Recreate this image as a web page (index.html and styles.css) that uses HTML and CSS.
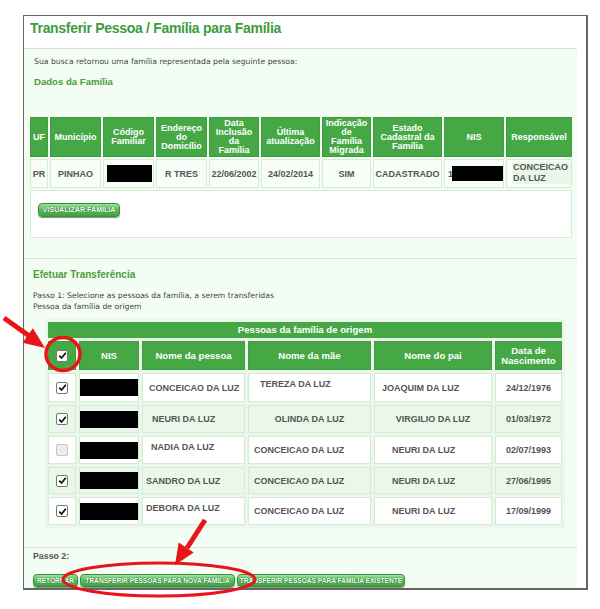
FILE: index.html
```html
<!DOCTYPE html>
<html lang="pt-BR">
<head>
<meta charset="utf-8">
<title>Transferir Pessoa / Família para Família</title>
<link rel="stylesheet" href="styles.css">
</head>
<body>
<div class="frame">
  <div class="head"><h1>Transferir Pessoa / Família para Família</h1></div>
  <div class="panel">
    <p class="intro">Sua busca retornou uma família representada pela seguinte pessoa:</p>
    <h2 class="sec sec-dados">Dados da Família</h2>
    <table class="fam">
      <colgroup>
        <col class="f-uf"><col class="f-mun"><col class="f-cod"><col class="f-end"><col class="f-dat">
        <col class="f-ult"><col class="f-ind"><col class="f-est"><col class="f-nis"><col class="f-resp">
      </colgroup>
      <tr class="fam-head">
        <th>UF</th>
        <th>Município</th>
        <th>Código<br>Familiar</th>
        <th>Endereço<br>do<br>Domicílio</th>
        <th>Data<br>Inclusão<br>da<br>Família</th>
        <th>Última<br>atualização</th>
        <th>Indicação<br>de<br>Família<br>Migrada</th>
        <th>Estado<br>Cadastral da<br>Família</th>
        <th>NIS</th>
        <th>Responsável</th>
      </tr>
      <tr class="fam-data">
        <td>PR</td>
        <td>PINHAO</td>
        <td><span class="redact redact-cod"></span></td>
        <td>R TRES</td>
        <td>22/06/2002</td>
        <td>24/02/2014</td>
        <td>SIM</td>
        <td>CADASTRADO</td>
        <td class="nis-fam"><span class="one">1</span><span class="redact redact-nis"></span></td>
        <td class="resp"><span class="resp-txt">CONCEICAO<br>DA LUZ</span></td>
      </tr>
      <tr class="fam-btn">
        <td colspan="10"><span class="btn btn-vis">VISUALIZAR FAMÍLIA</span></td>
      </tr>
    </table>

    <div class="sep sep-1"></div>

    <h2 class="sec sec-efet">Efetuar Transferência</h2>
    <p class="passo">Passo 1: Selecione as pessoas da família, a serem transferidas<br>Pessoa da família de origem</p>

    <table class="pes">
      <colgroup>
        <col class="p-cb"><col class="p-nis"><col class="p-nom"><col class="p-mae"><col class="p-pai"><col class="p-dat">
      </colgroup>
      <tr class="pes-title"><th colspan="6">Pessoas da família de origem</th></tr>
      <tr class="pes-head">
        <th><span class="cb"><svg viewBox="0 0 11 11" width="11" height="11"><path d="M2.3 5.6 L4.6 8 L8.8 2.8" fill="none" stroke="#111" stroke-width="1.8"/></svg></span></th>
        <th>NIS</th>
        <th>Nome da pessoa</th>
        <th>Nome da mãe</th>
        <th>Nome do pai</th>
        <th>Data de<br>Nascimento</th>
      </tr>
      <tr class="row-a h29">
        <td class="cbc"><span class="cb"><svg viewBox="0 0 11 11" width="11" height="11"><path d="M2.3 5.6 L4.6 8 L8.8 2.8" fill="none" stroke="#111" stroke-width="1.8"/></svg></span></td>
        <td class="nisc"><span class="redact redact-p"></span></td>
        <td class="pl6">CONCEICAO DA LUZ</td>
        <td class="pl11 top">TEREZA DA LUZ</td>
        <td class="pl7">JOAQUIM DA LUZ</td>
        <td class="ctr">24/12/1976</td>
      </tr>
      <tr class="row-b h28">
        <td class="cbc"><span class="cb"><svg viewBox="0 0 11 11" width="11" height="11"><path d="M2.3 5.6 L4.6 8 L8.8 2.8" fill="none" stroke="#111" stroke-width="1.8"/></svg></span></td>
        <td class="nisc"><span class="redact redact-p"></span></td>
        <td class="pl9">NEURI DA LUZ</td>
        <td class="ctr">OLINDA DA LUZ</td>
        <td class="ctr">VIRGILIO DA LUZ</td>
        <td class="ctr">01/03/1972</td>
      </tr>
      <tr class="row-a h28">
        <td class="cbc"><span class="cb cb-off"></span></td>
        <td class="nisc"><span class="redact redact-p"></span></td>
        <td class="pl8 top">NADIA DA LUZ</td>
        <td class="pl5">CONCEICAO DA LUZ</td>
        <td class="pl17">NEURI DA LUZ</td>
        <td class="ctr">02/07/1993</td>
      </tr>
      <tr class="row-b h27">
        <td class="cbc"><span class="cb"><svg viewBox="0 0 11 11" width="11" height="11"><path d="M2.3 5.6 L4.6 8 L8.8 2.8" fill="none" stroke="#111" stroke-width="1.8"/></svg></span></td>
        <td class="nisc"><span class="redact redact-p"></span></td>
        <td class="pl3">SANDRO DA LUZ</td>
        <td class="pl5">CONCEICAO DA LUZ</td>
        <td class="pl17">NEURI DA LUZ</td>
        <td class="ctr">27/06/1995</td>
      </tr>
      <tr class="row-a h28">
        <td class="cbc"><span class="cb"><svg viewBox="0 0 11 11" width="11" height="11"><path d="M2.3 5.6 L4.6 8 L8.8 2.8" fill="none" stroke="#111" stroke-width="1.8"/></svg></span></td>
        <td class="nisc"><span class="redact redact-p"></span></td>
        <td class="pl3 top">DEBORA DA LUZ</td>
        <td class="pl5">CONCEICAO DA LUZ</td>
        <td class="pl17">NEURI DA LUZ</td>
        <td class="ctr">17/09/1999</td>
      </tr>
    </table>

    <div class="sep sep-2"></div>

    <p class="passo2">Passo 2:</p>
    <div class="actions">
      <span class="btn btn-ret">RETORNAR</span>
      <span class="btn btn-nova">TRANSFERIR PESSOAS PARA NOVA FAMÍLIA</span>
      <span class="btn btn-exist">TRANSFERIR PESSOAS PARA FAMÍLIA EXISTENTE</span>
    </div>
  </div>
</div>

<svg class="marks" width="600" height="609" viewBox="0 0 600 609" aria-hidden="true">
  <line x1="4" y1="318" x2="30" y2="336.5" stroke="#e8141a" stroke-width="5"/>
  <polygon points="45,348 22.5,342.8 32.9,328.2" fill="#e8141a"/>
  <ellipse cx="63" cy="354" rx="17" ry="16.5" fill="none" stroke="#e8141a" stroke-width="3.5"/>
  <line x1="205" y1="520" x2="187" y2="548" stroke="#e8141a" stroke-width="5"/>
  <polygon points="175,565 178.7,542.4 193.7,552.4" fill="#e8141a"/>
  <ellipse cx="159" cy="579.5" rx="96" ry="16.5" fill="none" stroke="#e8141a" stroke-width="3"/>
</svg>
</body>
</html>
```

FILE: styles.css
```css
* { box-sizing: border-box; }
html, body { margin: 0; padding: 0; background: #fff; }
body { font-family: "Liberation Sans", Arial, sans-serif; color: #555; }

.frame {
  margin: 15px 0 0 23px;
  width: 565px;
  height: 575px;
  border: 1px solid #666;
  border-right: 2px solid #666;
  border-bottom: 2px solid #666;
  background: #fff;
}

.head { height: 32px; }
.head h1 {
  margin: 0;
  padding: 2px 0 0 6px;
  font-size: 14px;
  line-height: 20px;
  font-weight: bold;
  letter-spacing: -0.3px;
  color: #3d9c3d;
}

.panel {
  width: 553px;
  height: 540px;
  border-top: 1px solid #d6e4d6;
  background: #f3fdf3;
  overflow: hidden;
}

.intro {
  margin: 8px 0 0 10px;
  font: 7.7px/10px "DejaVu Sans", sans-serif;
  color: #444;
}

.sec {
  margin: 0;
  font-size: 9.6px;
  line-height: 12px;
  font-weight: bold;
  color: #4a9e3a;
}
.sec-dados { margin: 9px 0 0 10px; }
.sec-efet { margin: 10px 0 0 9px; font-size: 10px; }

/* family table */
.fam {
  margin: 27px 0 0 4px;
  width: 546px;
  table-layout: fixed;
  border-collapse: separate;
  border-spacing: 2px;
}
.f-uf { width: 18px; }
.f-mun { width: 51px; }
.f-cod { width: 51px; }
.f-end { width: 51px; }
.f-dat { width: 50px; }
.f-ult { width: 59px; }
.f-ind { width: 49px; }
.f-est { width: 69px; }
.f-nis { width: 60px; }
.f-resp { width: 66px; }

.fam th, .fam td { padding: 0; text-align: center; vertical-align: middle; }
.fam-head { height: 40px; }
.fam-head th {
  background: #45a845;
  border: 1px solid #3f9e3f;
  color: #fff;
  font-size: 9px;
  line-height: 9px;
  font-weight: bold;
}
.fam-data { height: 29px; }
.fam-data td {
  background: #f7fdf7;
  border: 1px solid #d5ebd5;
  font-size: 9px;
  font-weight: bold;
  color: #555;
  white-space: nowrap;
  overflow: hidden;
}
.fam-data td.nis-fam { text-align: left; padding-left: 3px; }
.one { display: inline-block; vertical-align: middle; width: 4px; overflow: hidden; }
.fam-data td.resp { text-align: left; padding-left: 6px; vertical-align: top; padding-top: 2px; }
.resp-txt { display: inline-block; background: #e9f7e9; line-height: 11px; padding-right: 4px; }
.fam-btn { height: 48px; }
.fam-btn td {
  background: #fff;
  border: 1px solid #d5ebd5;
  text-align: left;
  vertical-align: top;
  padding: 7px 0 0 7px;
}

.redact { display: inline-block; background: #000; vertical-align: middle; }
.redact-cod { width: 45px; height: 17px; margin-left: 2px; }
.redact-nis { width: 51px; height: 15px; }
.redact-p { display: block; width: 60px; height: 17px; }

/* buttons */
.btn {
  display: inline-block;
  height: 13px;
  border: 1px solid #3a8e3a;
  border-radius: 4px;
  background: linear-gradient(#9be39b 0%, #5cc35c 45%, #3da43d 100%);
  box-shadow: 0 1px 1px rgba(0,0,0,0.45);
  color: #fff;
  font-weight: bold;
  font-size: 6.6px;
  line-height: 11px;
  text-align: center;
  white-space: nowrap;
  text-shadow: 0 0 1px #1d5e1d, 0 0 1px #1d5e1d;
}
.btn-vis { width: 82px; height: 14px; font-size: 7.1px; line-height: 12px; }

.sep { height: 1px; background: #d8e6d8; }
.sep-1 { margin-top: 18px; }
.sep-2 { margin-top: 19px; }

.passo {
  margin: 9px 0 0 9px;
  font: 7.7px/11px "DejaVu Sans", sans-serif;
  color: #444;
}

/* persons table */
.pes {
  margin: 7px 0 0 21px;
  width: 520px;
  table-layout: fixed;
  border-collapse: separate;
  border-spacing: 3px;
  background: #eaf7ea;
}
.p-cb { width: 28px; }
.p-nis { width: 60px; }
.p-nom { width: 103px; }
.p-mae { width: 123px; }
.p-pai { width: 118px; }
.p-dat { width: 67px; }

.pes th, .pes td { padding: 0; vertical-align: middle; }
.pes-title { height: 16px; }
.pes-title th {
  background: #45a845;
  color: #fff;
  font-size: 9.6px;
  font-weight: bold;
  text-align: center;
  line-height: 14px;
}
.pes-head { height: 29px; }
.pes-head th {
  background: #45a845;
  border: 1px solid #3f9e3f;
  color: #fff;
  font-size: 9.6px;
  line-height: 10px;
  font-weight: bold;
  text-align: center;
}
.h29 { height: 29px; }
.h28 { height: 28px; }
.h27 { height: 27px; }
.pes td {
  border: 1px solid #d5ebd5;
  font-size: 9px;
  font-weight: bold;
  color: #555;
  white-space: nowrap;
  overflow: hidden;
}
.row-a td { background: #fff; }
.row-b td { background: #e9f8e9; }
.pes td.cbc { text-align: center; }
.pes td.nisc { padding: 0; }
.pes td.top { vertical-align: top; padding-top: 5px; }
.ctr { text-align: center; }
.pl3 { padding-left: 3px !important; }
.pl5 { padding-left: 5px !important; }
.pl6 { padding-left: 6px !important; }
.pl7 { padding-left: 7px !important; }
.pl8 { padding-left: 8px !important; }
.pl9 { padding-left: 9px !important; }
.pl11 { padding-left: 11px !important; }
.pl17 { padding-left: 17px !important; }

.cb {
  display: inline-block;
  width: 12px;
  height: 12px;
  border: 1px solid #777;
  border-radius: 2px;
  background: #fff;
  vertical-align: middle;
  line-height: 0;
}
.cb svg { display: block; margin: -0.5px 0 0 -0.5px; }
.cb-off { background: #ececec; border-color: #c6c6c6; }

.passo2 {
  margin: 3px 0 0 9px;
  font-size: 8.8px;
  line-height: 10px;
  font-weight: bold;
  color: #555;
}

.actions {
  display: flex;
  gap: 2px;
  margin: 13px 0 0 9px;
}
.btn-ret { width: 45px; }
.btn-nova { width: 155px; }
.btn-exist { width: 168px; }

.marks { position: absolute; top: 0; left: 0; pointer-events: none; }
```
